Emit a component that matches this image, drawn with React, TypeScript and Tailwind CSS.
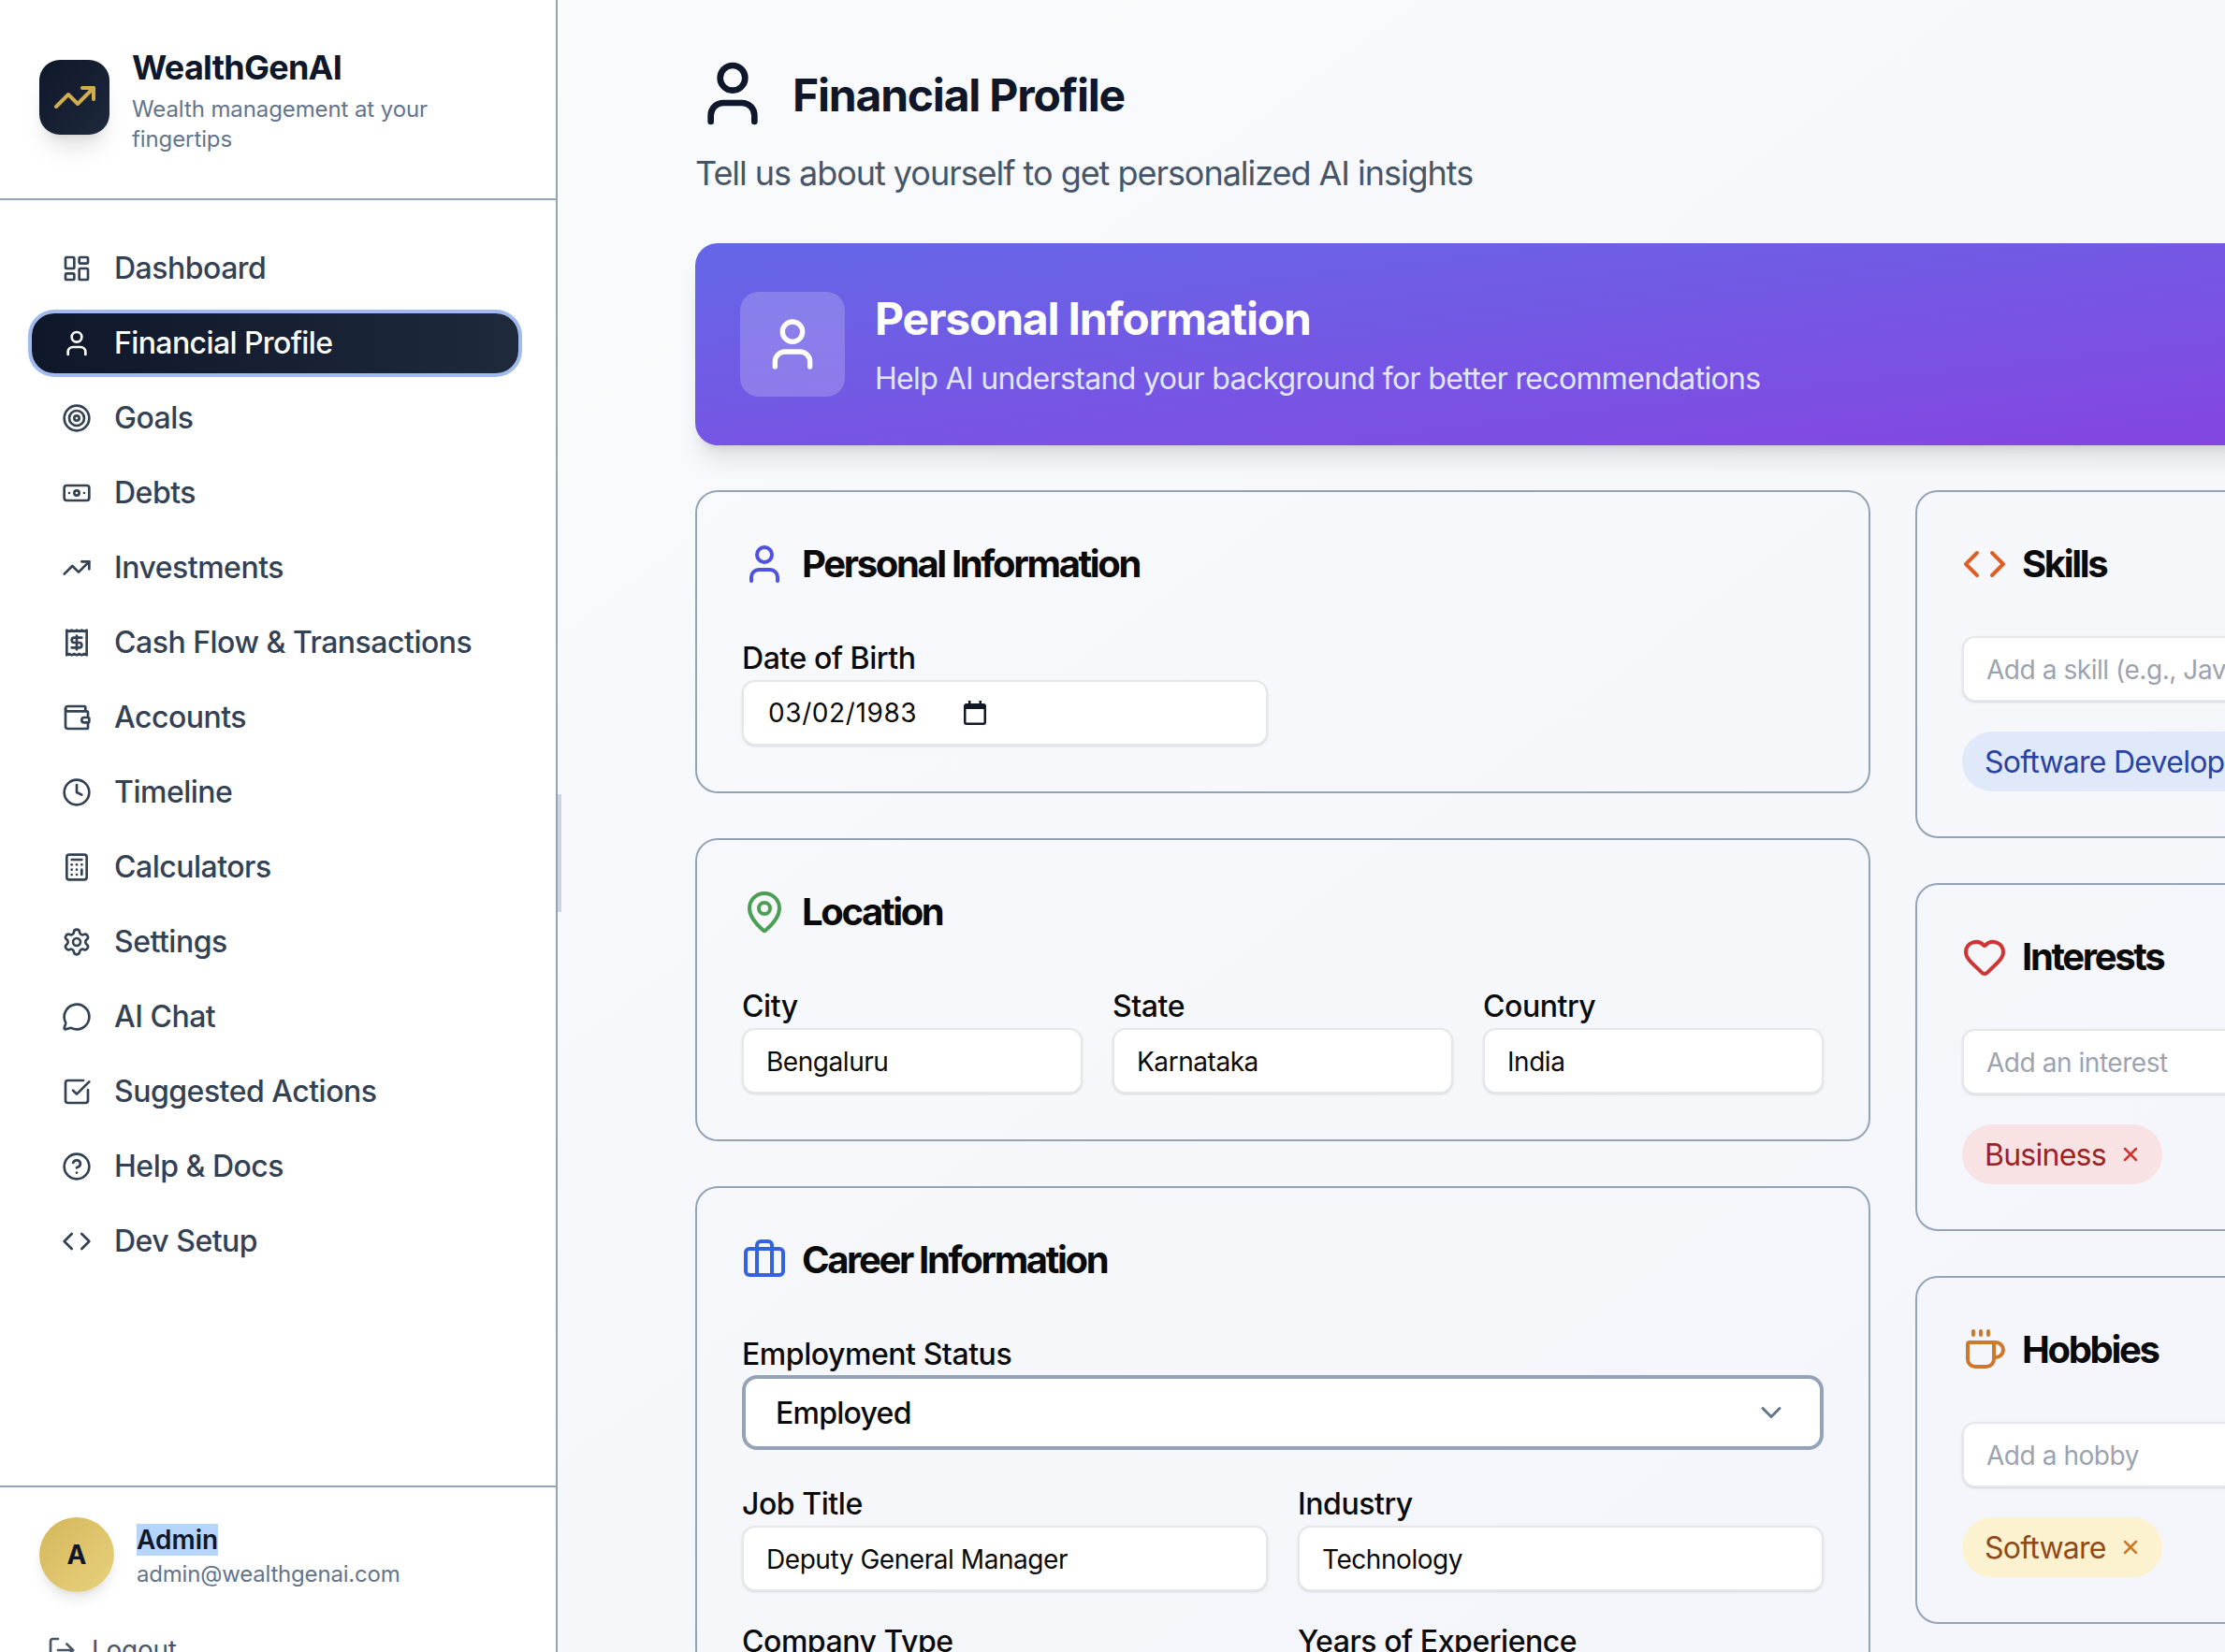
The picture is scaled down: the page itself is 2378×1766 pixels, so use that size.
import React from 'react';
import {
  LayoutDashboard, User, Target, Banknote, TrendingUp, Receipt, Wallet, Clock, Calculator, Settings,
  MessageCircle, SquareCheckBig, CircleHelp, Code, LogOut, MapPin, Briefcase, Heart, Coffee, X, ChevronDown,
} from 'lucide-react';

const navItems = [
  { label: 'Dashboard', icon: LayoutDashboard },
  { label: 'Financial Profile', icon: User, active: true },
  { label: 'Goals', icon: Target },
  { label: 'Debts', icon: Banknote },
  { label: 'Investments', icon: TrendingUp },
  { label: 'Cash Flow & Transactions', icon: Receipt },
  { label: 'Accounts', icon: Wallet },
  { label: 'Timeline', icon: Clock },
  { label: 'Calculators', icon: Calculator },
  { label: 'Settings', icon: Settings },
  { label: 'AI Chat', icon: MessageCircle },
  { label: 'Suggested Actions', icon: SquareCheckBig },
  { label: 'Help & Docs', icon: CircleHelp },
  { label: 'Dev Setup', icon: Code },
];

const Sidebar: React.FC = () => (
  <aside className="relative w-[596px] shrink-0 border-r-2 border-[#94a3b8] bg-white">
    <div className="flex h-[214px] items-center gap-6 border-b-2 border-[#94a3b8] pb-[4px] pl-[42px] pr-[48px]">
      <div className="flex h-20 w-[75px] shrink-0 items-center justify-center rounded-[22px] bg-linear-to-br from-[#0f172a] to-[#1e293b] shadow-xl">
        <TrendingUp size={48} className="text-[#d0ae4d]" />
      </div>
      <div>
        <h1 className="text-[36px] font-bold leading-[56px] tracking-[-0.02em] text-[#0f172a]">WealthGenAI</h1>
        <p className="mt-[1px] text-2xl leading-8 tracking-[-0.1px] text-[#64748b]">Wealth management at your fingertips</p>
      </div>
    </div>

    <nav className="flex h-[1374px] flex-col gap-4 pl-[34px] pr-[40px] pt-[41px]">
      {navItems.map(({ label, icon: Icon, active }) => (
        <div
          key={label}
          className={
            active
              ? 'flex h-16 shrink-0 items-center gap-6 rounded-3xl bg-linear-to-r from-[#0f172a] to-[#1e293b] px-8 text-[32px] font-medium tracking-[-0.6px] text-white ring-4 ring-[#a0bbf0]'
              : 'flex h-16 shrink-0 items-center gap-6 rounded-3xl px-8 text-[32px] font-medium tracking-[-0.5px] text-[#334155]'
          }
        >
          <Icon size={32} className="shrink-0" />
          <span>{label}</span>
        </div>
      ))}
    </nav>

    <div className="border-t-2 border-[#94a3b8] px-[42px] pt-8">
      <div className="flex items-center gap-6">
        <div className="flex h-20 w-20 shrink-0 items-center justify-center rounded-full bg-linear-to-br from-[#d4b65a] to-[#e8d27e] text-[28px] font-bold text-[#0f172a] shadow-lg">
          A
        </div>
        <div className="pt-[2px]">
          <div className="text-[28px] font-semibold leading-9 text-[#0f172a]">
            <span className="bg-[#b5d5fd]">Admin</span>
          </div>
          <div className="mt-[3px] text-2xl leading-8 tracking-[-0.2px] text-[#64748b]">admin@wealthgenai.com</div>
        </div>
      </div>
      <div className="mt-[41px] flex items-center gap-4 pl-2 text-[28px] tracking-[-0.3px] text-[#475569]">
        <LogOut size={32} />
        <span>Logout</span>
      </div>
    </div>

    <div className="absolute -right-[6px] top-[849px] h-[126px] w-1 bg-[#cbd5e1]" />
  </aside>
);

const cardClass = 'rounded-3xl border-2 border-[#94a3b8] p-12 pb-[49px]';
const tagCardClass = 'rounded-3xl border-2 border-[#94a3b8] p-12';
const inputClass =
  'h-[70px] w-full rounded-[14px] border-2 border-[#e5e7eb] bg-white px-6 pt-px text-[28px] tracking-[-0.45px] text-[#0a0a0a] shadow-sm outline-none placeholder:text-[#9ca3af]';

const CardTitle: React.FC<{ icon: React.ReactNode; title: string }> = ({ icon, title }) => (
  <div className="mb-12 flex h-[58px] items-center gap-4">
    {icon}
    <h3 className="text-[40px] font-bold tracking-[-2.35px] text-[#0a0a0a]">{title}</h3>
  </div>
);

const Field: React.FC<{ label: string; value?: string }> = ({ label, value }) => (
  <div>
    <label className="block text-[32px] font-medium leading-[47px] tracking-[-0.45px] text-[#0a0a0a]">{label}</label>
    {value !== undefined && <input className={inputClass} defaultValue={value} />}
  </div>
);

const TagCard: React.FC<{
  icon: React.ReactNode;
  title: string;
  placeholder: string;
  tag: string;
  chipClass: string;
  xClass: string;
}> = ({ icon, title, placeholder, tag, chipClass, xClass }) => (
  <section className={tagCardClass}>
    <CardTitle icon={icon} title={title} />
    <input className={inputClass} placeholder={placeholder} />
    <div className={`mt-8 inline-flex h-16 items-center gap-[14px] rounded-full pl-6 pr-[22px] text-[32px] tracking-[-0.75px] ${chipClass}`}>
      <span className="pt-[2px]">{tag}</span>
      <X size={24} strokeWidth={2.5} className={xClass} />
    </div>
  </section>
);

export default function App() {
  return (
    <div className="flex h-[1766px] w-[2378px] overflow-hidden bg-linear-to-br from-[#fafbfc] to-[#f3f5fb] font-[Inter,sans-serif]">
      <Sidebar />

      <main className="w-[1908px] shrink-0 pl-[147px] pt-[60px]">
        <div className="w-[1908px]">
          <div className="flex h-20 items-center gap-6">
            <User size={80} className="text-[#0f172a]" />
            <h2 className="mt-[3px] text-5xl font-bold tracking-[-0.025em] text-[#0f172a]">Financial Profile</h2>
          </div>
          <p className="mt-[20px] text-[36px] leading-[50px] tracking-[-1.04px] text-[#475569]">
            Tell us about yourself to get personalized AI insights
          </p>

          <div className="mt-[50px] flex h-[216px] items-center gap-8 rounded-3xl bg-linear-to-br from-[#6366e8] to-[#8542e0] px-12 shadow-xl">
            <div className="flex h-28 w-28 items-center justify-center rounded-[20px] bg-white/20">
              <User size={64} className="text-white" />
            </div>
            <div>
              <h2 className="text-5xl font-bold leading-[68px] tracking-[-0.025em] text-white">Personal Information</h2>
              <p className="mt-[6px] text-[32px] leading-[48px] tracking-[-0.66px] text-[#e0e7ff]">
                Help AI understand your background for better recommendations
              </p>
            </div>
          </div>

          <div className="mt-12 grid grid-cols-3 items-start gap-12">
            <div className="col-span-2 flex flex-col gap-12">
              <section className={cardClass}>
                <CardTitle icon={<User size={48} className="text-[#4f52e0]" />} title="Personal Information" />
                <div className="grid grid-cols-2 gap-8">
                  <div>
                    <Field label="Date of Birth" />
                    <div className="flex h-[70px] items-center rounded-[14px] border-2 border-[#e5e7eb] bg-white pl-[26px] text-[28px] tracking-[0.6px] text-[#0a0a0a] shadow-sm">
                      <span className="w-[209px]">03/02/1983</span>
                      <svg width="24" height="26" viewBox="0 0 24 26">
                        <path d="M5 0h2.5v3h9V0H19v3h2a3 3 0 0 1 3 3v17a3 3 0 0 1-3 3H3a3 3 0 0 1-3-3V6a3 3 0 0 1 3-3h2zM2.5 9v14.5h19V9z" fill="#111827" />
                      </svg>
                    </div>
                  </div>
                </div>
              </section>

              <section className={cardClass}>
                <CardTitle icon={<MapPin size={48} className="text-[#4a9f55]" />} title="Location" />
                <div className="grid grid-cols-3 gap-8">
                  <Field label="City" value="Bengaluru" />
                  <Field label="State" value="Karnataka" />
                  <Field label="Country" value="India" />
                </div>
              </section>

              <section className={cardClass}>
                <CardTitle icon={<Briefcase size={48} className="text-[#3563e0]" />} title="Career Information" />
                <Field label="Employment Status" />
                <div className="-mt-px flex h-20 items-center justify-between rounded-2xl border-4 border-[#94a3b8] bg-white pl-8 pr-[34px] text-[32px] font-medium tracking-[-0.75px] text-[#0a0a0a]">
                  <span className="pt-[2px]">Employed</span>
                  <ChevronDown size={36} className="text-[#64748b]" />
                </div>
                <div className="mt-[34px] grid grid-cols-2 gap-x-8 gap-y-[30px]">
                  <Field label="Job Title" value="Deputy General Manager" />
                  <Field label="Industry" value="Technology" />
                  <Field label="Company Type" value="" />
                  <Field label="Years of Experience" value="" />
                </div>
              </section>
            </div>

            <div className="flex flex-col gap-12">
              <TagCard
                icon={<Code size={48} className="text-[#dd5f26]" />}
                title="Skills"
                placeholder="Add a skill (e.g., JavaScript)"
                tag="Software Development"
                chipClass="bg-[#dfe9fa] text-[#2a42a5]"
                xClass="text-[#2563eb]"
              />
              <TagCard
                icon={<Heart size={48} className="text-[#d03535]" />}
                title="Interests"
                placeholder="Add an interest"
                tag="Business"
                chipClass="bg-[#f9e2e3] text-[#9b2226]"
                xClass="text-[#d03535]"
              />
              <TagCard
                icon={<Coffee size={48} className="text-[#cb7a2c]" />}
                title="Hobbies"
                placeholder="Add a hobby"
                tag="Software"
                chipClass="bg-[#fdf2cf] text-[#8f4a1c]"
                xClass="text-[#cb7a2c]"
              />
            </div>
          </div>
        </div>
      </main>
    </div>
  );
}
